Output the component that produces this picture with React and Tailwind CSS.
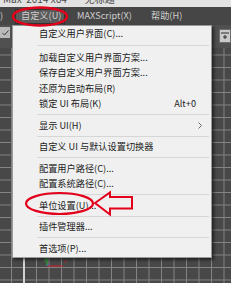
const font = { fontFamily: '"Noto Sans CJK SC", "Noto Sans", sans-serif' };

const groups = [
  [{ label: "自定义用户界面(C)..." }],
  [
    { label: "加载自定义用户界面方案..." },
    { label: "保存自定义用户界面方案..." },
    { label: "还原为启动布局(R)" },
    { label: "锁定 UI 布局(K)", shortcut: "Alt+0" },
  ],
  [{ label: "显示 UI(H)", submenu: true }],
  [{ label: "自定义 UI 与默认设置切换器" }],
  [{ label: "配置用户路径(C)..." }, { label: "配置系统路径(C)..." }],
  [{ label: "单位设置(U)..." }],
  [{ label: "插件管理器..." }],
  [{ label: "首选项(P)..." }],
];

function MenuItem({ item }) {
  return (
    <div className="flex h-[15.5px] items-center justify-between pl-[26px] pr-[15px] text-[9.2px] leading-none text-[#222]">
      <span className="whitespace-pre">{item.label}</span>
      {item.shortcut && <span>{item.shortcut}</span>}
      {item.submenu && (
        <svg width="4" height="7" viewBox="0 0 4 7" className="-mr-[6px]">
          <path d="M0.5 0.5 L3.5 3.5 L0.5 6.5" fill="none" stroke="#6a6a6a" strokeWidth="1" />
        </svg>
      )}
    </div>
  );
}

function Separator({ first }) {
  return (
    <div className={`flex items-center pl-[24px] pr-[2px] ${first ? "h-[8px]" : "h-[6px]"}`}>
      <div className="h-px w-full bg-[#d6d6d6]" />
    </div>
  );
}

function DropdownMenu() {
  return (
    <div className="absolute left-[12px] top-[25px] w-[200px] border border-[#9a9a9a] bg-[#f0f0f0] shadow-[2px_2px_3px_rgba(0,0,0,0.55)]">
      {groups.map((group, i) => (
        <div key={i}>
          {i > 0 && <Separator first={i === 1} />}
          {group.map((item) => (
            <MenuItem key={item.label} item={item} />
          ))}
        </div>
      ))}
      <div className="h-[1px]" />
    </div>
  );
}

function Annotations() {
  return (
    <svg className="pointer-events-none absolute left-0 top-0" width="231" height="283">
      <ellipse cx="40" cy="16.5" rx="27" ry="9" fill="none" stroke="#e3001b" strokeWidth="2.5" />
      <ellipse cx="59.5" cy="203.5" rx="33.5" ry="10.5" fill="none" stroke="#e3001b" strokeWidth="2.2" />
      <polygon
        points="95,203 110,192.5 110,197 132,197 132,208.5 110,208.5 110,214.5"
        fill="none"
        stroke="#e3001b"
        strokeWidth="2"
        strokeLinejoin="miter"
      />
    </svg>
  );
}

export default function App() {
  return (
    <div className="relative flex h-[283px] w-[231px] flex-col overflow-hidden bg-[#4a4a4a]" style={font}>
      {/* title strip, cut off at the top */}
      <div className="h-[7px] overflow-hidden bg-[#e2e2e2]">
        <div className="-mt-[7px] whitespace-pre pl-[3px] text-[10px] leading-[12px] text-[#4a4a4a]">
          {"Max  2014 x64        无标题"}
        </div>
      </div>

      {/* menu bar */}
      <div className="flex h-[18px] items-center bg-[#464646] text-[9.2px] leading-none text-[#cfcfcf]">
        <span className="w-[15px]">)</span>
        <span className="flex h-[15px] w-[50px] items-center border border-[#333] bg-[#5a5a5a] pl-[5px]">
          自定义(U)
        </span>
        <span className="w-[86px] pl-[12px]">MAXScript(X)</span>
        <span>帮助(H)</span>
      </div>

      {/* toolbar */}
      <div className="flex h-[23px] items-start justify-between bg-[#505050]">
        <div className="mt-[2px] flex h-[11px] w-[10px] items-center justify-center bg-[#b9b9b9]">
          <svg width="7" height="6" viewBox="0 0 7 6">
            <path d="M0.5 3 L2.5 5 L6.5 0.5" fill="none" stroke="#3a3a3a" strokeWidth="1" />
          </svg>
        </div>
        <div className="mt-[4px] flex h-[14px] w-[12px] items-center justify-center border border-[#6c6c6c] bg-[#c9c9c9]">
          <svg width="8" height="8" viewBox="0 0 8 8">
            <path d="M0 1 H8" stroke="#2c2c2c" strokeWidth="1" />
            <path d="M4 3 V7 M2 5 H6" stroke="#2c2c2c" strokeWidth="1" />
          </svg>
        </div>
      </div>

      {/* viewport grid */}
      <div className="relative flex-1 bg-[#484848] bg-[linear-gradient(to_right,#858585_1px,transparent_1px),linear-gradient(to_bottom,#858585_1px,transparent_1px)] bg-size-[12.5px_12.5px] bg-position-[11px_6.5px]">
        <div className="absolute bottom-0 left-[23px] top-0 w-[2px] bg-[#d2d2d2]" />
        <svg className="absolute left-[44px] top-[207px]" width="26" height="14">
          <path d="M3 2 V11" stroke="#2fbf3a" strokeWidth="1" />
          <path d="M3 11 H19" stroke="#d0202a" strokeWidth="1" />
          <path d="M3 11 L5 9" stroke="#3a5ad8" strokeWidth="1" />
          <text x="20" y="8" fontSize="5" fill="#d0202a">x</text>
          <text x="0" y="5" fontSize="5" fill="#2fbf3a">y</text>
        </svg>
      </div>

      <DropdownMenu />
      <Annotations />
    </div>
  );
}
